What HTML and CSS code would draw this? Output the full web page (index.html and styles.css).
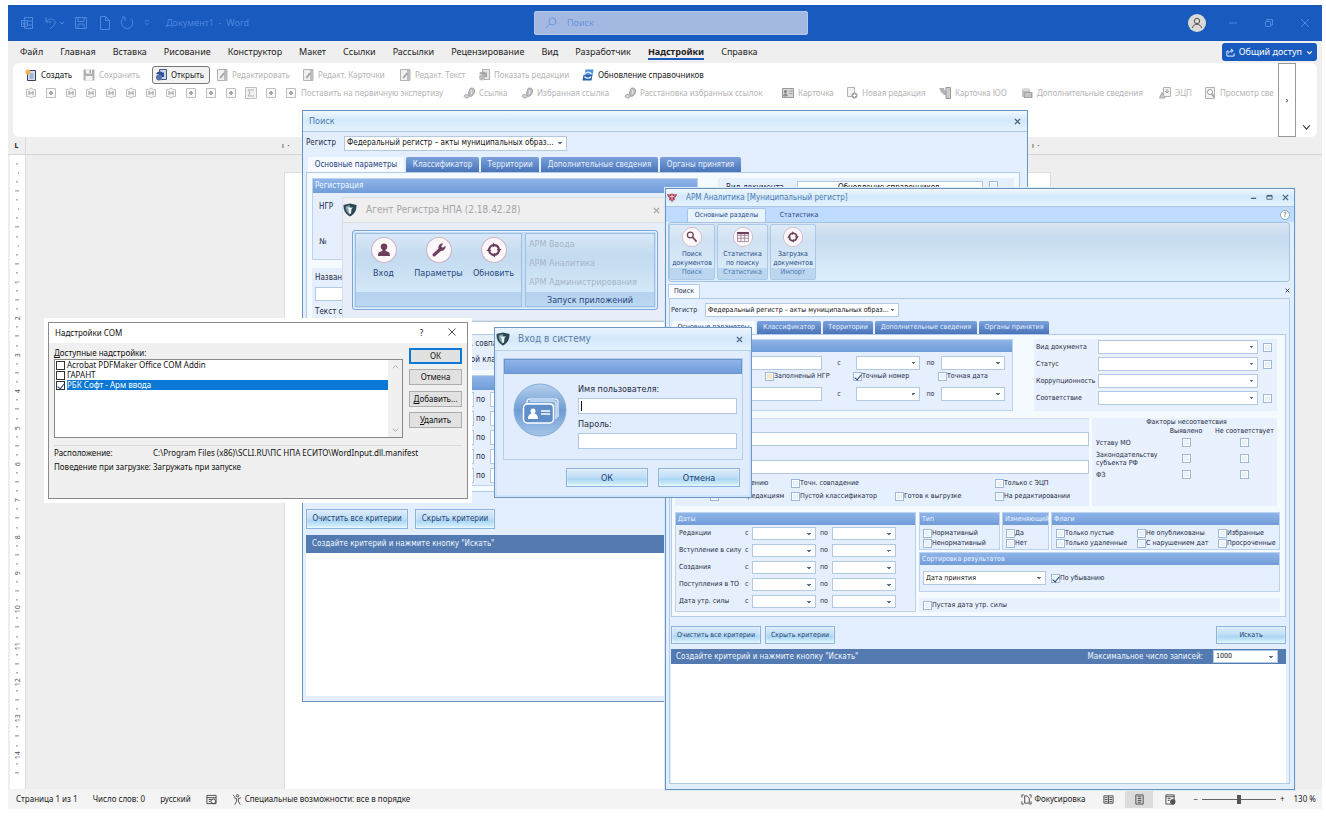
FILE: index.html
```html
<!DOCTYPE html>
<html lang="ru">
<head>
<meta charset="utf-8">
<title>Документ1 - Word</title>
<link rel="stylesheet" href="styles.css">
</head>
<body>
<svg class="defs" aria-hidden="true">
  <symbol id="i-doc" viewBox="0 0 12 12"><path d="M1.500 .5h9.500v11H1.500z" fill="#ececec" stroke="#999"/><path d="M8 1h3v10.500H8z" fill="#a8a8a8"/><path d="M3.500 8.500l4-5 1.500 1-4 5z" fill="#858585"/></symbol>
  <symbol id="i-new" viewBox="0 0 12 12"><path d="M2.500 1.500h8v10h-8z" fill="#d6e2f4" stroke="#31415e"/><path d="M4.500 5h4M4.500 7h4M4.500 9h4" stroke="#6d87b5"/><circle cx="3" cy="3" r="2.600" fill="#f2b45a"/></symbol>
  <symbol id="i-save" viewBox="0 0 12 12"><path d="M.5.500h11v11H.5z" fill="#989898"/><path d="M3 .5h6v4H3zM2.500 7h7v4.500h-7z" fill="#f1f1f1"/><path d="M6.500 1h1.500v3H6.500z" fill="#888"/></symbol>
  <symbol id="i-open" viewBox="0 0 12 12"><path d="M4.500.500h7v10h-7z" fill="#cdd7ec" stroke="#4a5b80"/><path d="M1 5c2-3 5-3 7-1l1-1v5H5l1.500-1.500C4.500 5 3 5.500 1 5z" fill="#2d4f94"/><circle cx="4" cy="8.500" r="3" fill="#5673ae"/></symbol>
  <symbol id="i-rev" viewBox="0 0 12 12"><path d="M4.500.500h7v10h-7z" fill="#ddd" stroke="#999"/><path d="M1 5c2-3 5-3 7-1l1-1v5H5l1.500-1.500C4.500 5 3 5.500 1 5z" fill="#888"/><circle cx="4" cy="8.500" r="3" fill="#a5a5a5"/></symbol>
  <symbol id="i-sync" viewBox="0 0 12 12"><path d="M3.500.500h8l-1 5.500h-8z" fill="#4d92d9"/><path d="M1.500 6h9l-1 5.500h-9z" fill="#2c5da7"/><path d="M2.500 5.500c2-3 5-3 7-.5M2.500 7.500c2 2.500 5 2 6.500 0" fill="none" stroke="#dff0ff" stroke-width="1.300"/></symbol>
  <symbol id="i-tag" viewBox="0 0 12 12"><path d="M1.500 2.500h2l2.500-1.500 2.500 1.500h2v7h-2L6 11 3.500 9.500h-2z" fill="#efefef" stroke="#aaa"/><path d="M4 4v4M8 4v4M4 6h4" stroke="#999" stroke-width="1.300"/></symbol>
  <symbol id="i-box" viewBox="0 0 12 12"><path d="M1.500 1.500h9v9h-9z" fill="#f6f6f6" stroke="#aaa"/><path d="M6 4v4M4 6h4" stroke="#8a8a8a" stroke-width="2"/></symbol>
  <symbol id="i-sum" viewBox="0 0 12 12"><path d="M.5.500h11v11H.5z" fill="#eee" stroke="#aaa"/><path d="M3 3h6M3 3l2 3-2 3h6" fill="none" stroke="#999"/></symbol>
  <symbol id="i-link" viewBox="0 0 12 12"><path d="M5.500 6L7 1.500C9 .5 11.500 1 11.500 4c0 3-2 5-4 5.500L6 8z" fill="#a8a8a8" stroke="#858585"/><path d="M1 9c1-2 4-2 5.500 0 0 2-4.500 3-5.500 0z" fill="#c4c4c4" stroke="#888"/><path d="M8 3l1 2-1 2" fill="none" stroke="#eee"/></symbol>
  <symbol id="i-card" viewBox="0 0 12 12"><path d="M.5 1.500h11v9H.5z" fill="#ccc" stroke="#777"/><circle cx="3.500" cy="4.500" r="1.500" fill="#555"/><path d="M1.500 9c0-3 4-3 4 0zM7 4h3.500M7 6.500h3.500" fill="#666" stroke="#777"/></symbol>
  <symbol id="i-add" viewBox="0 0 12 12"><path d="M1.500.500h7v9h-7z" fill="#eee" stroke="#999"/><circle cx="8.500" cy="8.500" r="3" fill="#888"/><path d="M7 8.500h3M8.500 7v3" stroke="#fff"/></symbol>
  <symbol id="i-hand" viewBox="0 0 12 12"><path d="M0 1h5l1 3h2v4H5L2 5z" fill="#999"/><path d="M7 .5h4.500v11H7z" fill="#bbb" stroke="#777"/></symbol>
  <symbol id="i-db" viewBox="0 0 12 12"><path d="M1 2h8v8H1z" fill="#aaa"/><ellipse cx="5" cy="2.500" rx="4" ry="1.500" fill="#ccc"/><path d="M3 5h8.500v6H3z" fill="#888"/><path d="M4 7h6M4 9h6" stroke="#ddd"/></symbol>
  <symbol id="i-sig" viewBox="0 0 12 12"><path d="M4.500.500h7v9h-7z" fill="#eee" stroke="#999"/><path d="M8 2v4M6 4l2 2 2-2" stroke="#777" fill="none"/><path d="M.5 11L3 5.500 6 11z" fill="#bbb" stroke="#888"/></symbol>
  <symbol id="i-view" viewBox="0 0 12 12"><path d="M1.500.500h9v11h-9z" fill="#eee" stroke="#999"/><circle cx="6" cy="5" r="2.500" fill="#fff" stroke="#777"/><path d="M8 7l2 3" stroke="#777" stroke-width="1.500"/></symbol>
  <symbol id="i-shield" viewBox="0 0 14 14"><path d="M.5 2L7 .5 13.500 2c0 5-1.500 9-6.500 11.500C2 11 .5 7 .5 2z" fill="#2b4653"/><path d="M2.500 3.500L7 2v10C4 10 2.500 7 2.500 3.500z" fill="#7fa0a5"/><path d="M4 4.500h6L8.500 6 8 11 6 10l-.500-4z" fill="#e7f5f4"/></symbol>
  <symbol id="i-ring" viewBox="0 0 24 24"><circle cx="12" cy="12" r="11.500" fill="#fdf9fb" stroke="#cfb3c4"/><circle cx="12" cy="12" r="4.500" fill="none" stroke="#6d3f5c" stroke-width="2" stroke-dasharray="6.300 .77"/><path d="M11 5l3 2.500-3 2zM19 11l-2.500 3-2-3zM13 19l-3-2.500 3-2zM5 13l2.500-3 2 3z" fill="#6d3f5c"/></symbol>
  <symbol id="i-x" viewBox="0 0 8 8"><path d="M1 1l6 6M7 1L1 7" fill="none" stroke="currentColor" stroke-width="1.500"/></symbol>
</svg>

<div class="word">
  <header class="titlebar">
    <div class="quick">
      <svg class="q" viewBox="0 0 14 14"><path d="M4.500 1.500h8v11h-8zM1.500 4.500h6v6h-6zM8 5h4M8 9h4M3 6l1 3 .7-2 .7 2 1-3"/></svg>
      <svg class="q" viewBox="0 0 14 14"><path d="M2 1v5h5M2 6c3-4 8-4 9 0 .5 3-2 4-5 7"/></svg>
      <svg class="q tiny" viewBox="0 0 6 6"><path d="M1 2l2 2 2-2"/></svg>
      <svg class="q" viewBox="0 0 14 14"><path d="M1.500 1.500h11v11h-11zM4 1.500v4h6v-4M4 12.500V8h6v4.500"/></svg>
      <svg class="q gap" viewBox="0 0 14 14"><path d="M2.500.500h5l4 4v9h-9zM7.500.500v4h4"/></svg>
      <svg class="q gap" viewBox="0 0 14 14"><path d="M3 2C0 5 1 12 7 12.500c6 0 7-7 4-10M2 1h3v4"/></svg>
      <svg class="q gap2 tiny" viewBox="0 0 8 8"><path d="M1 1h6M1.500 4L4 6l2.500-2"/></svg>
      <span class="docname">Документ1&nbsp; -&nbsp; Word</span>
    </div>
    <label class="search"><svg viewBox="0 0 12 12"><circle cx="7.500" cy="4.500" r="3.500"/><path d="M5 7l-4 4"/></svg><input type="text" placeholder="Поиск" aria-label="Поиск"></label>
    <div class="sys">
      <svg class="user" viewBox="0 0 18 18"><circle cx="9" cy="9" r="9" fill="#dcdad8" stroke="none"/><circle cx="9" cy="7" r="2.700"/><path d="M4.500 14c.5-5 8.500-5 9 0"/></svg>
      <svg class="q" viewBox="0 0 10 10"><path d="M1 5h8"/></svg>
      <svg class="q" viewBox="0 0 10 10"><path d="M1.500 3.500h5v5h-5zM3 3.500v-2h5.500V7h-2"/></svg>
      <svg class="q" viewBox="0 0 10 10"><path d="M1 1l8 8M9 1L1 9"/></svg>
    </div>
  </header>
  <nav class="menu">
    <a href="#">Файл</a><a href="#">Главная</a><a href="#">Вставка</a><a href="#">Рисование</a><a href="#">Конструктор</a><a href="#">Макет</a><a href="#">Ссылки</a><a href="#">Рассылки</a><a href="#">Рецензирование</a><a href="#">Вид</a><a href="#">Разработчик</a><a href="#" class="on">Надстройки</a><a href="#">Справка</a>
    <button class="share"><svg viewBox="0 0 10 10"><path d="M3 3.500H1v5.500h8V6M3 6c0-2 2-3 4-3M5.500 1L8 3 5.500 5"/></svg>Общий доступ<svg class="tiny" viewBox="0 0 6 6"><path d="M1 2l2 2 2-2"/></svg></button>
  </nav>
  <section class="ribbon">
    <div class="tools">
      <div class="row one">
        <button class="live"><svg><use href="#i-new"/></svg>Создать</button>
        <button><svg><use href="#i-save"/></svg>Сохранить</button>
        <button class="live boxed"><svg><use href="#i-open"/></svg>Открыть</button>
        <button><svg><use href="#i-doc"/></svg>Редактировать</button>
        <button><svg><use href="#i-doc"/></svg>Редакт. Карточки</button>
        <button><svg><use href="#i-doc"/></svg>Редакт. Текст</button>
        <button><svg><use href="#i-rev"/></svg>Показать редакции</button>
        <button class="live"><svg><use href="#i-sync"/></svg>Обновление справочников</button>
      </div>
      <div class="row two">
        <button aria-label="Н"><svg><use href="#i-tag"/></svg></button><button aria-label="Вставить"><svg><use href="#i-box"/></svg></button><button aria-label="Е"><svg><use href="#i-tag"/></svg></button><button aria-label="Ч"><svg><use href="#i-tag"/></svg></button><button aria-label="Р"><svg><use href="#i-tag"/></svg></button><button aria-label="Г"><svg><use href="#i-tag"/></svg></button><button aria-label="С"><svg><use href="#i-tag"/></svg></button><button aria-label="№"><svg><use href="#i-tag"/></svg></button><button aria-label="Блок 1"><svg><use href="#i-box"/></svg></button><button aria-label="Блок 2"><svg><use href="#i-box"/></svg></button><button aria-label="Блок 3"><svg><use href="#i-box"/></svg></button><button aria-label="Сумма"><svg><use href="#i-sum"/></svg></button><button aria-label="Блок 4"><svg><use href="#i-box"/></svg></button>
        <button><svg><use href="#i-box"/></svg>Поставить на первичную экспертизу</button>
        <button><svg><use href="#i-link"/></svg>Ссылка</button>
        <button><svg><use href="#i-link"/></svg>Избранная ссылка</button>
        <button><svg><use href="#i-link"/></svg>Расстановка избранных ссылок</button>
        <button><svg><use href="#i-card"/></svg>Карточка</button>
        <button><svg><use href="#i-add"/></svg>Новая редакция</button>
        <button><svg><use href="#i-hand"/></svg>Карточка ЮО</button>
        <button><svg><use href="#i-db"/></svg>Дополнительные сведения</button>
        <button><svg><use href="#i-sig"/></svg>ЭЦП</button>
        <button><svg><use href="#i-view"/></svg>Просмотр све</button>
      </div>
    </div>
    <button class="more">›</button>
    <button class="fold" aria-label="Свернуть ленту"><svg viewBox="0 0 8 6"><path d="M1 1l3 3.500L7 1"/></svg></button>
  </section>
  <div class="hruler"><b class="corner">L</b><span class="ticks"><i>ı &nbsp;·</i><i>ı &nbsp;·</i></span></div>
  <div class="work">
    <div class="vruler"><span>-</span><span>-</span><span>-</span><span>1</span><span>2</span><span>3</span><span>4</span><span>5</span><span>6</span><span>7</span><span>8</span><span>9</span><span>10</span><span>11</span><span>12</span><span>13</span><span>14</span></div>
    <div class="canvas"><div class="page"></div></div>
  </div>
  <footer class="status">
    <span>Страница 1 из 1</span><span>Число слов: 0</span><span>русский</span>
    <svg viewBox="0 0 12 12"><path d="M1 1.500h10v9H1zM1 4h10M3 6h3M3 8h2"/><circle cx="8" cy="8" r="2.500"/></svg>
    <span class="acc"><svg viewBox="0 0 12 12"><circle cx="6" cy="2" r="1.300"/><path d="M2 4l3 1v3l-2 3.500M10 4L7 5v3l2 3.500M1 1l2 2"/></svg>Специальные возможности: все в порядке</span>
    <span class="focus"><svg viewBox="0 0 12 12"><path d="M1 4V1h2M1 8v3h2M9 1h2v3M11 8v3H9M4 2h2.500L9 4.500V10H4z"/></svg>Фокусировка</span>
    <button class="mode" aria-label="Чтение"><svg viewBox="0 0 12 12"><path d="M1 2h10v8H1zM6 2v8M2 4h3M2 6h3M2 8h3M7 4h3M7 6h3M7 8h3"/></svg></button>
    <button class="mode on" aria-label="Разметка"><svg viewBox="0 0 12 12"><path d="M2 1h8v10H2zM4 3h4M4 5h4M4 7h4M4 9h4"/></svg></button>
    <button class="mode" aria-label="Веб"><svg viewBox="0 0 12 12"><path d="M1 1h9v10H1zM1 3h9M3 5h3M3 7h2"/><circle cx="8.500" cy="8.500" r="2.500" fill="#555"/></svg></button>
    <span class="zoom"><span>−</span><input type="range" min="0" max="100" value="50" aria-label="Масштаб"><span>+</span></span>
    <span class="pct">130 %</span>
  </footer>
</div>

<section class="win search-win">
  <div class="wtitle"><span>Поиск</span><button aria-label="Закрыть"><svg><use href="#i-x"/></svg></button></div>
  <div class="reg"><label for="reg1">Регистр</label><select id="reg1"><option>Федеральный регистр – акты муниципальных образ...</option></select></div>
  <div class="tabs"><button class="on">Основные параметры</button><button>Классификатор</button><button>Территории</button><button>Дополнительные сведения</button><button>Органы принятия</button></div>
  <div class="sheet">
    <div class="top">
      <div class="group regbox"><h3>Регистрация</h3><p>НГР</p><p>№</p></div>
      <div class="side"><label for="kind1">Вид документа</label><select id="kind1"><option>Обновление справочников</option></select><input type="checkbox" aria-label="Вид"></div>
    </div>
    <div class="names"><label for="nm1">Название</label><input id="nm1" type="text"><label for="tx1">Текст содержит</label><input id="tx1" type="text">
      <div class="opts"><label><input type="checkbox">Точн. совпадение</label><label><input type="checkbox">Пустой классификатор</label></div></div>
    <div class="group dates"><h3>Даты</h3>
      <div class="date"><span>Редакции</span><span>с</span><select aria-label="Редакции с"></select><span>по</span><select aria-label="Редакции по"></select></div>
      <div class="date"><span>Вступление</span><span>с</span><select aria-label="Вступление с"></select><span>по</span><select aria-label="Вступление по"></select></div>
      <div class="date"><span>Создания</span><span>с</span><select aria-label="Создания с"></select><span>по</span><select aria-label="Создания по"></select></div>
      <div class="date"><span>Поступления</span><span>с</span><select aria-label="Поступления с"></select><span>по</span><select aria-label="Поступления по"></select></div>
      <div class="date"><span>Утрата</span><span>с</span><select aria-label="Утрата с"></select><span>по</span><select aria-label="Утрата по"></select></div>
    </div>
  </div>
  <div class="acts"><button class="glass">Очистить все критерии</button><button class="glass">Скрыть критерии</button></div>
  <div class="bar">Создайте критерий и нажмите кнопку "Искать"</div>
  <div class="results"></div>
</section>

<section class="agent">
  <div class="atitle"><svg class="shield"><use href="#i-shield"/></svg><span>Агент Регистра НПА (2.18.42.28)</span><button aria-label="Закрыть"><svg><use href="#i-x"/></svg></button></div>
  <div class="abody">
    <div class="abox">
      <div class="icons">
        <button><svg viewBox="0 0 24 24"><circle cx="12" cy="12" r="11.500" fill="#fdf9fb" stroke="#cfb3c4"/><circle cx="12" cy="9" r="3" fill="#6d3f5c"/><path d="M6.500 17.500c0-4 2-4 4-4.500v-2h3v2c2 .5 4 .5 4 4.500z" fill="#6d3f5c"/></svg>Вход</button>
        <button><svg viewBox="0 0 24 24"><circle cx="12" cy="12" r="11.500" fill="#fdf9fb" stroke="#cfb3c4"/><path d="M7.500 16.500l5.500-5" stroke="#6d3f5c" stroke-width="3" stroke-linecap="round"/><path d="M11.500 10.500c-.5-3 2-5 4.500-4.500l-2 2.500 1.500 1.500L18 8c.5 3-2 5.500-5 4.500z" fill="#6d3f5c"/></svg>Параметры</button>
        <button><svg viewBox="0 0 24 24"><use href="#i-ring"/></svg>Обновить</button>
      </div>
      <div class="apps"><button>АРМ Ввода</button><button>АРМ Аналитика</button><button>АРМ Администрирования</button><strong>Запуск приложений</strong></div>
    </div>
  </div>
</section>

<section class="win arm">
  <div class="wtitle"><svg class="crest" viewBox="0 0 10 10"><path d="M0 1l2.500.500L5 .5l2.500 1L10 1 9 4 7.500 4.500 8 7l-2 .5L5 9.500 4 7.500 2 7l.500-2.500L1 4z" fill="#b04355"/><path d="M5 1.500v6M3 3.500h4M2 2.500l1 1M8 2.500l-1 1" stroke="#f5dfe4" stroke-width=".8"/></svg><span>АРМ Аналитика [Муниципальный регистр]</span>
    <button aria-label="Свернуть"><svg viewBox="0 0 8 8"><path d="M1 5h6" stroke="currentColor" stroke-width="1.500"/></svg></button><button aria-label="Развернуть"><svg viewBox="0 0 8 8"><path d="M1 2h6v4H1z" fill="none" stroke="currentColor"/><path d="M1 2h6" stroke="currentColor" stroke-width="2"/></svg></button><button aria-label="Закрыть"><svg><use href="#i-x"/></svg></button></div>
  <div class="rtabs"><button class="on">Основные разделы</button><button>Статистика</button><span class="help">?</span></div>
  <div class="rbody">
    <div class="rgroup"><button><svg viewBox="0 0 24 24"><circle cx="12" cy="12" r="11.500" fill="#fdf9fb" stroke="#cfb3c4"/><circle cx="10" cy="9.500" r="3.500" fill="none" stroke="#6d3f5c" stroke-width="1.500"/><path d="M12.500 12l5 5.500" stroke="#6d3f5c" stroke-width="2"/></svg>Поиск<br>документов</button><em>Поиск</em></div>
    <div class="rgroup"><button><svg viewBox="0 0 24 24"><circle cx="12" cy="12" r="11.500" fill="#fdf9fb" stroke="#cfb3c4"/><path d="M5.500 6.500h13v11h-13zM5.500 10h13M5.500 13.500h13M9.500 8v9M14 8v9" fill="none" stroke="#9c7d92"/><path d="M5 6h14v2.500H5z" fill="#6d3f5c"/></svg>Статистика<br>по поиску</button><em>Статистика</em></div>
    <div class="rgroup"><button><svg viewBox="0 0 24 24"><use href="#i-ring"/></svg>Загрузка<br>документов</button><em>Импорт</em></div>
  </div>
  <div class="dtabs"><button>Поиск</button><button class="dx" aria-label="Закрыть вкладку"><svg><use href="#i-x"/></svg></button></div>
  <div class="armbody">
    <div class="reg"><label for="reg2">Регистр</label><select id="reg2"><option>Федеральный регистр – акты муниципальных образ...</option></select></div>
    <div class="tabs"><button class="on">Основные параметры</button><button>Классификатор</button><button>Территории</button><button>Дополнительные сведения</button><button>Органы принятия</button></div>
    <div class="sheet">
      <div class="top">
        <div class="group regbox"><h3>Регистрация</h3>
          <div class="rr"><span>НГР</span><input type="text" aria-label="НГР"><span>с</span><select aria-label="Номер с"></select><span>по</span><select aria-label="Номер по"></select></div>
          <div class="rc"><label class="warm"><input type="checkbox">Заполненый НГР</label><label><input type="checkbox" checked>Точный номер</label><label><input type="checkbox">Точная дата</label></div>
          <div class="rr"><span>№</span><input type="text" aria-label="Номер"><span>с</span><select aria-label="Дата с"></select><span>по</span><select aria-label="Дата по"></select></div>
        </div>
        <div class="kinds">
          <label for="k1">Вид документа</label><select id="k1"></select><input type="checkbox" aria-label="Вид документа">
          <label for="k2">Статус</label><select id="k2"></select><input type="checkbox" aria-label="Статус">
          <label for="k3">Коррупционность</label><select id="k3"></select><span></span>
          <label for="k4">Соответствие</label><select id="k4"></select><input type="checkbox" aria-label="Соответствие">
        </div>
      </div>
      <div class="mid">
        <div class="names"><label for="nm2">Название</label><input id="nm2" type="text"><label for="tx2">Текст содержит</label><input id="tx2" type="text">
          <div class="opts"><label class="c1"><input type="checkbox">По вхождению</label><label class="c2"><input type="checkbox">Точн. совпадение</label><label class="c4"><input type="checkbox">Только с ЭЦП</label></div>
          <div class="opts"><label class="c1"><input type="checkbox">По всем редакциям</label><label class="c2"><input type="checkbox">Пустой классификатор</label><label class="c3"><input type="checkbox">Готов к выгрузке</label><label class="c4"><input type="checkbox">На редактировании</label></div>
        </div>
        <table class="factors"><caption>Факторы несоответсвия</caption>
          <tr><th></th><th>Выявлено</th><th>Не соответствует</th></tr>
          <tr><td>Уставу МО</td><td><input type="checkbox" aria-label="Уставу МО выявлено"></td><td><input type="checkbox" aria-label="Уставу МО не соответствует"></td></tr>
          <tr><td>Законодательству<br>субъекта РФ</td><td><input type="checkbox" aria-label="Субъекту выявлено"></td><td><input type="checkbox" aria-label="Субъекту не соответствует"></td></tr>
          <tr><td>ФЗ</td><td><input type="checkbox" aria-label="ФЗ выявлено"></td><td><input type="checkbox" aria-label="ФЗ не соответствует"></td></tr>
        </table>
      </div>
      <div class="low">
        <div class="group dates"><h3>Даты</h3>
          <div class="date"><span>Редакции</span><span>с</span><select aria-label="Редакции с"></select><span>по</span><select aria-label="Редакции по"></select></div>
          <div class="date"><span>Вступление в силу</span><span>с</span><select aria-label="Вступление с"></select><span>по</span><select aria-label="Вступление по"></select></div>
          <div class="date"><span>Создания</span><span>с</span><select aria-label="Создания с"></select><span>по</span><select aria-label="Создания по"></select></div>
          <div class="date"><span>Поступления в ТО</span><span>с</span><select aria-label="Поступления с"></select><span>по</span><select aria-label="Поступления по"></select></div>
          <div class="date"><span>Дата утр. силы</span><span>с</span><select aria-label="Дата утр. силы с"></select><span>по</span><select aria-label="Дата утр. силы по"></select></div>
        </div>
        <div class="right">
          <div class="flags">
            <div class="group"><h3>Тип</h3><div class="chk"><label><input type="checkbox">Нормативный</label><label><input type="checkbox">Ненормативный</label></div></div>
            <div class="group"><h3>Изменяющий</h3><div class="chk"><label><input type="checkbox">Да</label><label><input type="checkbox">Нет</label></div></div>
            <div class="group"><h3>Флаги</h3><div class="chk three"><label><input type="checkbox">Только пустые</label><label><input type="checkbox">Не опубликованы</label><label><input type="checkbox">Избранные</label><label><input type="checkbox">Только удаленные</label><label><input type="checkbox">С нарушением дат</label><label><input type="checkbox">Просроченные</label></div></div>
          </div>
          <div class="group sort"><h3>Сортировка результатов</h3><div class="sortrow"><select aria-label="Сортировка"><option>Дата принятия</option></select><label><input type="checkbox" checked>По убыванию</label></div></div>
          <div class="empty"><label><input type="checkbox">Пустая дата утр. силы</label></div>
        </div>
      </div>
    </div>
    <div class="acts"><button class="glass">Очистить все критерии</button><button class="glass">Скрыть критерии</button><button class="glass find">Искать</button></div>
    <div class="bar"><span>Создайте критерий и нажмите кнопку "Искать"</span><label for="max">Максимальное число записей:</label><select id="max"><option>1000</option></select></div>
    <div class="results"></div>
  </div>
</section>

<section class="com">
  <div class="ctitle"><span>Надстройки COM</span><button>?</button><button aria-label="Закрыть"><svg viewBox="0 0 8 8"><path d="M.5.500l7 7M7.500.500l-7 7" stroke="#222" stroke-width=".8"/></svg></button></div>
  <div class="cbody">
    <div class="cmain">
      <div class="clist"><span><u>Д</u>оступные надстройки:</span>
        <div class="list"><div class="items"><label><input type="checkbox"><span>Acrobat PDFMaker Office COM Addin</span></label><label><input type="checkbox"><span>ГАРАНТ</span></label><label class="sel"><input type="checkbox" checked><span>РБК Софт - Арм ввода</span></label></div><div class="scroll"><svg viewBox="0 0 8 8"><path d="M1 6l3-3 3 3"/></svg><svg viewBox="0 0 8 8"><path d="M1 2l3 3 3-3"/></svg></div></div>
      </div>
      <div class="cbtns"><button class="def">ОК</button><button>Отмена</button><button class="apart"><u>Д</u>обавить...</button><button><u>У</u>далить</button></div>
    </div>
    <dl><dt>Расположение:</dt><dd>C:\Program Files (x86)\SCLI.RU\ПС НПА ЕСИТО\WordInput.dll.manifest</dd><dt>Поведение при загрузке:</dt><dd>Загружать при запуске</dd></dl>
  </div>
</section>

<section class="login">
  <div class="ltitle"><svg class="shield"><use href="#i-shield"/></svg><span>Вход в систему</span><button aria-label="Закрыть"><svg><use href="#i-x"/></svg></button></div>
  <form class="lform">
    <div class="lhead"></div>
    <div class="lrow">
      <svg class="badge" viewBox="0 0 54 54"><defs><linearGradient id="bg" x1="0" y1="0" x2="0" y2="1"><stop offset="0" stop-color="#b5d0ee"/><stop offset=".5" stop-color="#6f9cd2"/><stop offset="1" stop-color="#a4c5ea"/></linearGradient></defs><circle cx="27" cy="27" r="26" fill="url(#bg)" stroke="#86add8"/><path d="M14 20v-1c0-2 1-3 3-3h25c2 0 3 1 3 3v15M12 21h26c2 0 3 1 3 3M17 18h23c2 0 3 1 3 3v15" fill="none" stroke="#eef6ff" stroke-width="1.200"/><rect x="10.500" y="21" width="30" height="19" rx="4" fill="#5f8fc9" stroke="#fff" stroke-width="1.500"/><circle cx="20" cy="28" r="2.500" fill="#fff"/><path d="M15 36c0-4 2-5 3.500-5.500v-2h3v2C23 31 25 32 25 36z" fill="#fff"/><path d="M28 28h9M28 31h9" stroke="#fff" stroke-width="1.300"/></svg>
      <div class="fields"><label for="usr">Имя пользователя:</label><span class="caretbox"><input id="usr" type="text"></span><label for="pwd">Пароль:</label><input id="pwd" type="password"></div>
    </div>
  </form>
  <div class="lacts"><button class="glass">ОК</button><button class="glass">Отмена</button></div>
</section>
</body>
</html>
```
FILE: styles.css
```css
* { box-sizing: border-box; }
body { margin: 0; background: #fff; font: 9px/12px "Noto Sans", "Open Sans", sans-serif; color: #222; height: 100vh; overflow: hidden; position: relative; }
button, input, select { font: inherit; color: inherit; margin: 0; padding: 0; }
button { background: none; border: 0; white-space: nowrap; }
a { color: inherit; text-decoration: none; }
h3, p, dl, dd { margin: 0; }
svg { flex: none; }
.defs { position: absolute; width: 0; height: 0; }

/* Word frame */
.word { display: flex; flex-direction: column; height: calc(100vh - 7px); padding: 5px 4px 0 8px; background: linear-gradient(#efefef, #efefef) no-repeat 8px 40px / calc(100% - 12px) 200px; }
.titlebar { display: grid; grid-template-columns: 1fr 274px 1fr; align-items: center; height: 36px; background: #185abd; color: #4f88de; padding-left: 12px; }
.quick { display: flex; align-items: center; }
.q { width: 14px; height: 14px; fill: none; stroke: #4f88de; margin-right: 10px; }
.q.tiny { width: 6px; height: 6px; margin: 0 9px 0 -9px; }
.q.gap { margin-right: 8px; }
.q.gap2.tiny { margin: 0 16px 0 2px; }
.docname { white-space: nowrap; }
.search { display: flex; align-items: center; gap: 10px; height: 24px; padding: 0 10px; background: #a3b9e2; border: 1px solid #b6c8ea; border-radius: 2px; }
.search svg { width: 12px; height: 12px; fill: none; stroke: #6f96dc; }
.search input { flex: 1; font-size: 9px; }
.search input::placeholder { color: #6b92d8; }
.sys { display: flex; justify-content: flex-end; align-items: center; gap: 26px; padding-right: 12px; }
.sys .q { width: 10px; height: 10px; margin: 0; }
.user { width: 18px; height: 18px; fill: none; stroke: #555; margin-right: -4px; }
.menu { display: flex; align-items: center; gap: 17px; height: 22px; padding: 0 5px 0 12px; background: #efefef; }
.menu .on { font-weight: bold; box-shadow: 0 2px #185abd; }
.share { display: flex; align-items: center; gap: 4px; margin-left: auto; height: 18px; padding: 0 4px; border-radius: 3px; background: #185abd; color: #fff; }
.share svg { width: 9px; height: 9px; fill: none; stroke: #fff; }
.share .tiny { width: 7px; }
.ribbon { display: flex; height: 74px; margin: 0 5px; background: #fff; border-radius: 6px; }
.tools { flex: 1; min-width: 0; overflow: hidden; padding: 2px 0 0 12px; }
.row { display: grid; height: 20px; align-items: center; justify-items: start; }
.row.two { height: 16px; }
.one { grid-template-columns: 58px 69px 64px 86px 97px 79px 104px 140px; }
.two { grid-template-columns: repeat(13, 20px) 178px 58px 103px 158px 64px 93px 82px 138px 45px 70px; }
.row button { display: flex; align-items: center; gap: 4px; color: #b4b4b4; font-size: 8px; }
.row svg { width: 12px; height: 12px; }
.row button:not(.live) svg { opacity: .75; }
.one .live { color: #222; }
.one .boxed { height: 18px; padding: 0 5px 0 2px; border: 1px solid #777; border-radius: 3px; background: #f3f3f3; }
.more { width: 18px; border: 1px solid #999; }
.fold { width: 21px; padding-bottom: 6px; display: flex; align-items: flex-end; justify-content: center; }
.fold svg { width: 9px; height: 7px; fill: none; stroke: #333; }
.hruler { display: flex; height: 18px; background: #efefef; border-bottom: 1px solid #d5d5d5; align-items: center; }
.corner { width: 18px; text-align: center; font-size: 7px; border-right: 1px solid #ddd; height: 17px; line-height: 18px; }
.ticks { flex: 1; display: flex; gap: 738px; padding-left: 256px; }
.ticks i { width: 12px; font-style: normal; font-size: 7px; white-space: nowrap; }
.work { flex: 1; display: flex; min-height: 0; background: #eee; }
.vruler { width: 18px; display: flex; flex-direction: column; padding-bottom: 16px; background: #fff; border-right: 1px solid #ddd; border-left: 2px solid #eee; }
.vruler span { flex: 1; display: flex; align-items: center; justify-content: center; writing-mode: vertical-rl; transform: rotate(180deg); font-size: 7px; color: #555; background: linear-gradient(#888, #888) no-repeat 50% 25% / 2px 1px, linear-gradient(#888, #888) no-repeat 50% 75% / 2px 1px, linear-gradient(#888, #888) no-repeat 50% 0 / 4px 1px; }
.canvas { flex: 1; padding: 17px 271px 0 258px; }
.page { height: 100%; background: #fff; border: 1px solid #ddd; border-bottom: 0; }
.status { display: flex; align-items: center; height: 20px; padding: 0 6px 0 8px; background: #f4f4f4; font-size: 8px; gap: 15px; white-space: nowrap; }
.status svg { width: 11px; height: 11px; fill: none; stroke: #444; }
.acc, .focus { display: flex; align-items: center; gap: 2px; }
.focus { margin-left: auto; }
.mode { width: 28px; height: 18px; display: flex; align-items: center; justify-content: center; margin: 0 -6px; }
.mode.on { background: #dcdcdc; }
.zoom { display: flex; align-items: center; gap: 4px; }
.zoom input { appearance: none; width: 74px; height: 1px; background: #666; }
.zoom input::-webkit-slider-thumb { appearance: none; width: 4px; height: 9px; background: #555; }
.pct { margin-left: -6px; }

/* Shared window parts */
.win { position: absolute; display: flex; flex-direction: column; border: 1px solid #6c93c0; background: #e3efff; font: 8px/10px "DejaVu Sans Condensed", "Noto Sans", sans-serif; color: #1d2a44; overflow: hidden; }
.wtitle { display: flex; align-items: center; color: #4c7ab3; background: linear-gradient(#f0f8ff, #d3e9fb 45%, #e6f3fe); border-bottom: 1px solid #a8c8ea; }
.wtitle span { flex: 1; }
.wtitle button, .atitle button, .ltitle button { display: flex; color: #4a6483; }
.wtitle button svg, .atitle button svg, .ltitle button svg { width: 7px; height: 7px; }
input[type=text], input[type=password], select { appearance: none; border: 1px solid #b3c8e2; background: #fff; border-radius: 0; min-width: 0; outline: 0; }
.search input[type=text] { border: 0; background: none; }
select { padding: 0 12px 0 2px; color: #111; background: conic-gradient(from -45deg at 50% 100%, #5b6f8c 90deg, transparent 0) no-repeat right 4px center / 4px 2px, #fff; }
input[type=checkbox] { appearance: none; flex: none; width: 9px; height: 9px; border: 1px solid #9cb8da; background: #e9f1fb; box-shadow: inset 0 0 0 1px #fff; display: grid; place-items: center; }
input[type=checkbox]:checked::before { content: ""; width: 3px; height: 6px; border: solid #22406c; border-width: 0 1px 1px 0; transform: rotate(40deg); }
label { white-space: nowrap; }
.win label:has(input) { display: flex; align-items: center; gap: 0; }
.reg { display: flex; align-items: center; }
.tabs { display: flex; gap: 2px; align-items: stretch; }
.tabs button { background: linear-gradient(#7ba2dc, #4a74b8); color: #e9f2ff; border-radius: 2px 2px 0 0; text-align: center; }
.tabs .on { background: #f7fbff; color: #1d3c78; }
.sheet { border: 1px solid #b2cbe8; background: #f5faff; }
.group { background: #e5effd; border: 1px solid #bcd2ee; }
.group h3 { font-size: inherit; font-weight: normal; color: #f0f6ff; background: linear-gradient(#8fb4e8, #709cd8); padding: 0 2px; }
.glass { border: 1px solid #8db3dc; background: linear-gradient(#dbecfb, #c2def7 45%, #a9d6f4 60%, #dff5ff); color: #1f4272; box-shadow: inset 0 0 2px #fff; }
.bar { background: #537bb1; color: #f2f7ff; display: flex; align-items: center; }
.results { flex: 1; background: #fff; }

/* Search window */
.search-win { left: 302px; top: 110px; width: 726px; height: 592px; padding: 0 4px 5px 3px; }
.search-win .wtitle { height: 21px; margin: 0 -4px 0 -3px; padding: 0 6px; font-size: 9px; }
.search-win .reg { height: 25px; gap: 7px; padding-bottom: 3px; }
.search-win .reg label { width: 31px; }
.search-win .reg select { width: 223px; height: 15px; }
.search-win .tabs { height: 15px; padding-left: 2px; }
.search-win .tabs button { width: 73px; }
.search-win .tabs .on { width: 96px; }
.search-win .tabs button:nth-child(3) { width: 58px; }
.search-win .tabs button:nth-child(4) { width: 117px; }
.search-win .tabs button:nth-child(5) { width: 81px; }
.search-win .sheet { padding: 5px; margin-right: 3px; }
.search-win .top { display: grid; grid-template-columns: 386px 1fr; column-gap: 20px; }
.search-win .regbox { height: 82px; }
.search-win h3 { height: 14px; line-height: 14px; }
.search-win .regbox p { padding: 9px 6px 16px; }
.side { display: flex; align-items: flex-start; gap: 6px; background: #e5effd; padding: 3px 8px; }
.side label { width: 65px; padding-top: 2px; }
.side select { width: 186px; height: 14px; padding-left: 40px; }
.search-win .names { display: flex; flex-direction: column; margin-top: 8px; padding: 5px 3px; background: #e5effd; }
.search-win .names > input { height: 14px; margin: 4px 0; }
.search-win .names > input + label { padding-top: 2px; }
.search-win .opts { display: grid; gap: 6px; padding: 0 0 0 129px; }
.search-win .dates { margin-top: 5px; }
.search-win .date { display: grid; grid-template-columns: 74px 8px 72px 12px 72px; gap: 2px; align-items: center; height: 19px; padding-left: 3px; }
.search-win .date select { height: 15px; }
.search-win .acts { display: flex; gap: 7px; margin: 17px 0 6px; }
.search-win .glass { height: 20px; width: 102px; }
.search-win .glass + .glass { width: 80px; }
.search-win .bar { height: 18px; padding-left: 6px; }

/* Agent window */
.agent { position: absolute; left: 342px; top: 197px; width: 326px; height: 124px; display: flex; flex-direction: column; background: #efeff0; border: 1px solid #d9dde4; font: 10px/12px "DejaVu Sans Condensed", "Noto Sans", sans-serif; color: #27477c; }
.atitle { display: flex; align-items: center; gap: 9px; height: 25px; padding: 0 7px 0 0; color: #a3a5a8; border-bottom: 1px solid #dcdcde; }
.atitle span, .ltitle span { flex: 1; }
.atitle button { color: #a3a5a8; }
.shield { width: 14px; height: 14px; }
.abody { flex: 1; padding: 7px 9px 10px 9px; background: #e7eefa; }
.abox { display: grid; grid-template-columns: 167px 1fr; gap: 3px; height: 100%; padding: 2px; border: 1px solid #7da5d4; border-radius: 3px; background: #c7def5; box-shadow: inset 0 0 0 1px #e5f2ff; }
.icons, .apps { border: 1px solid #9dbfe4; background: linear-gradient(#d8e8f7, #c3daf0 30%, #d3e8f8 80%, #b4d1ee 81%, #bcd8f2); }
.icons { display: grid; grid-template-columns: 55px 55px 55px; padding-top: 3px; align-items: start; }
.icons button { display: flex; flex-direction: column; align-items: center; gap: 4px; font-size: 9px; }
.icons svg { width: 26px; height: 26px; }
.apps { display: flex; flex-direction: column; padding: 0 3px; }
.apps button { height: 19px; text-align: left; color: #a5b5c9; font-size: 9px; }
.apps strong { text-align: center; font-weight: normal; font-size: 9px; margin-top: auto; }

/* Analytics window */
.arm { left: 665px; top: 188px; width: 630px; height: 602px; padding: 0 4px 5px 2px; font-size: 7px; line-height: 9px; box-shadow: 0 0 0 1px #d8ebfc; }
.arm .wtitle { height: 18px; margin: 0 -4px 0 -2px; padding: 0 5px 0 1px; gap: 9px; font-size: 8px; }
.crest { width: 10px; height: 10px; }
.rtabs { display: flex; height: 15px; margin: 0 -4px 0 -2px; padding: 1px 4px 0 21px; background: #bfdbff; font-size: 7px; color: #1f4a86; }
.rtabs button { width: 66px; }
.rtabs .on { width: 79px; background: #e6f2fe; border: 1px solid #a5c6ea; border-bottom: 0; border-radius: 2px 2px 0 0; }
.help { margin-left: auto; width: 10px; height: 10px; border-radius: 50%; background: #fff; border: 1px solid #8aa; text-align: center; line-height: 8px; margin-top: 2px; }
.rbody { display: flex; gap: 2px; height: 60px; padding: 1px 0; border: 1px solid #a4c3e2; border-radius: 3px; background: linear-gradient(#dce6f2, #c6dbef 25%, #dceffc); }
.rgroup { display: flex; flex-direction: column; width: 46px; border: 1px solid #aac9e8; border-radius: 2px; background: linear-gradient(#dfeaf6, #cfe1f3 30%, #dceefa); color: #1f4a86; }
.rgroup:nth-child(2) { width: 51px; }
.rgroup button { flex: 1; line-height: 9px; }
.rgroup svg { display: block; width: 20px; height: 20px; margin: 1px auto 3px; }
.rgroup em { height: 11px; font-style: normal; text-align: center; color: #4a76b0; background: #bcd6ef; }
.dtabs { display: flex; justify-content: space-between; height: 16px; padding-top: 2px; }
.dtabs button { width: 32px; background: #f7fbff; border: 1px solid #b2cbe8; border-bottom: 0; }
.dtabs .dx { width: 5px; border: 0; background: none; }
.dx svg { width: 5px; height: 5px; }
.armbody { flex: 1; display: flex; flex-direction: column; margin-left: 1px; padding: 0 3px 0 1px; border: 1px solid #b2cbe8; }
.arm .reg { height: 22px; }
.arm .reg label { width: 34px; }
.arm .reg select { width: 194px; height: 14px; padding-right: 8px; }
.arm .tabs { height: 13px; padding-left: 1px; }
.arm .tabs button { width: 64px; }
.arm .tabs .on { width: 83px; }
.arm .tabs button:nth-child(3) { width: 50px; }
.arm .tabs button:nth-child(4) { width: 102px; }
.arm .tabs button:nth-child(5) { width: 70px; }
.arm .sheet { padding: 4px 8px 4px 3px; }
.arm h3 { height: 12px; line-height: 12px; }
.arm select, .arm input[type=text] { height: 14px; }
.arm .top { display: grid; grid-template-columns: 338px 1fr; column-gap: 21px; }
.arm .regbox { height: 72px; }
.rr { display: grid; grid-template-columns: 44px 102px 34px 64px 21px 64px; align-items: center; padding-top: 4px; }
.rr span { text-align: center; }
.rc { display: grid; grid-template-columns: 88px 85px 74px; justify-content: end; align-items: center; height: 13px; }
.warm input { background: #f3e9c4; }
.kinds { display: grid; grid-template-columns: 62px 1fr 14px; grid-auto-rows: 14px; row-gap: 3px; align-items: center; padding: 1px 5px 2px 2px; background: #e9f1fe; }
.kinds input { justify-self: end; }
.mid { display: grid; grid-template-columns: 1fr 185px; gap: 3px; margin-top: 7px; }
.arm .names { display: flex; flex-direction: column; background: #e5effd; border-top: 1px solid #cfe0f4; padding: 3px 0; height: 88px; }
.arm .names > input { margin: 1px 0 3px; height: 14px; flex: none; }
.arm .names > input + label { padding-top: 1px; }
.arm .opts { display: grid; grid-template-columns: 35px 81px 104px 100px 1fr; height: 14px; align-items: center; }
.c1 { grid-column: 2; }
.c2 { grid-column: 3; }
.c3 { grid-column: 4; }
.c4 { grid-column: 5; }
.factors { display: block; height: 88px; padding-left: 4px; background: #e9f1fe; }
.factors caption { display: block; line-height: 9px; }
.factors tbody { display: grid; grid-template-rows: 8px 15px 17px 15px; }
.factors tr { display: grid; grid-template-columns: 62px 56px 61px; align-items: center; }
.factors th, .factors td { padding: 0; font-weight: normal; white-space: nowrap; line-height: 8px; }
.factors td + td { display: grid; justify-items: center; }
.low { display: grid; grid-template-columns: 241px 1fr; column-gap: 3px; margin-top: 6px; }
.arm .date { display: grid; grid-template-columns: 66px 7px 64px 16px 64px; align-items: center; height: 17px; padding-left: 3px; }
.arm .date span:nth-child(4) { text-align: center; }
.arm .date select { height: 13px; }
.right { display: flex; flex-direction: column; }
.flags { display: grid; grid-template-columns: 81px 47px 1fr; gap: 2px; height: 38px; }
.chk { display: grid; grid-auto-rows: 10px; gap: 0 1px; padding: 3px 3px 0; }
.chk.three { grid-template-columns: 80px 80px 1fr; padding-left: 4px; }
.sort { margin-top: 2px; height: 40px; }
.sortrow { display: flex; gap: 5px; padding: 6px 3px; }
.sortrow select { width: 123px; }
.empty { margin-top: 6px; padding: 3px 4px 2px; background: #e9f1fe; }
.arm .acts { display: flex; gap: 4px; margin: 9px 0 5px; }
.arm .glass { width: 90px; height: 18px; }
.arm .glass:nth-child(2), .arm .glass.find { width: 70px; }
.arm .glass.find { margin-left: auto; }
.arm .bar { height: 15px; padding: 0 8px 0 5px; gap: 10px; font-size: 8px; }
.arm .bar span { flex: 1; }
.arm .bar select { width: 65px; height: 13px; font-size: 7px; }

/* COM add-ins dialog */
.com { position: absolute; left: 48px; top: 322px; width: 420px; height: 177px; display: flex; flex-direction: column; background: #f0f0f0; border: 1px solid #8a8a8a; box-shadow: 0 0 0 4px #fff; font: 8px/10px "Noto Sans", "Open Sans", sans-serif; color: #111; }
.ctitle { display: flex; align-items: center; height: 20px; padding: 0 11px 0 6px; background: #fff; }
.ctitle span { flex: 1; }
.ctitle button { width: 9px; margin-left: 21px; }
.ctitle svg { width: 8px; height: 8px; }
.cbody { flex: 1; padding: 4px 5px; }
.cmain { display: flex; gap: 6px; padding-bottom: 7px; border-bottom: 1px solid #dcdcdc; }
.clist { flex: 1; padding-top: 1px; }
.list { display: flex; height: 79px; margin-top: 1px; background: #fff; border: 1px solid #888; }
.items { flex: 1; }
.items label { display: flex; height: 10px; gap: 2px; align-items: center; }
.items span { flex: 1; line-height: 10px; }
.items .sel span { background: #0a78d4; color: #fff; }
.items input[type=checkbox] { border-color: #333; background: #fff; margin-left: 1px; }
.scroll { width: 14px; background: #f0f0f0; display: flex; flex-direction: column; justify-content: space-between; align-items: center; padding: 3px 0; }
.scroll svg { width: 7px; height: 7px; fill: none; stroke: #aaa; }
.cbtns { width: 53px; display: flex; flex-direction: column; gap: 5px; padding-top: 1px; }
.cbtns button { height: 16px; border: 1px solid #adadad; background: #e1e1e1; }
.cbtns .def { border: 2px solid #0a78d4; line-height: 10px; }
.cbtns .apart { margin-top: 1px; }
.com dl { display: grid; grid-template-columns: 99px 1fr; row-gap: 4px; padding-top: 2px; }

/* Login dialog */
.login { position: absolute; left: 494px; top: 327px; width: 258px; height: 171px; display: flex; flex-direction: column; background: #e1edfd; border: 1px solid #6f97c4; box-shadow: inset 0 0 0 2px #cfe4fa; font: 9px/12px "DejaVu Sans Condensed", "Noto Sans", sans-serif; color: #1d2a44; }
.ltitle { display: flex; align-items: center; gap: 8px; height: 23px; padding: 0 8px 0 1px; font-size: 10px; color: #5a7ea8; background: linear-gradient(#eaf5ff, #d3e8fa 50%, #e4f1fd); border-bottom: 1px solid #b2cfee; }
.lform { margin: 7px 8px 8px; border: 1px solid #b7cfec; height: 102px; }
.lhead { height: 15px; background: linear-gradient(#8fb4e8, #709cd8); border: 1px solid #6a94cc; }
.lrow { display: grid; grid-template-columns: 54px 1fr; gap: 11px; padding: 9px 5px 0 9px; align-items: start; }
.badge { width: 54px; height: 54px; }
.fields { display: flex; flex-direction: column; }
.fields input { width: 100%; height: 16px; }
.caretbox { display: flex; margin: 3px 0 4px; background: #fff; position: relative; }
.fields label[for=pwd] { margin-bottom: 3px; }
.caretbox::after { content: ""; position: absolute; left: 3px; top: 3px; width: 1px; height: 10px; background: #111; }
.lacts { display: flex; justify-content: flex-end; gap: 10px; padding-right: 11px; }
.lacts .glass { width: 82px; height: 19px; }
```
